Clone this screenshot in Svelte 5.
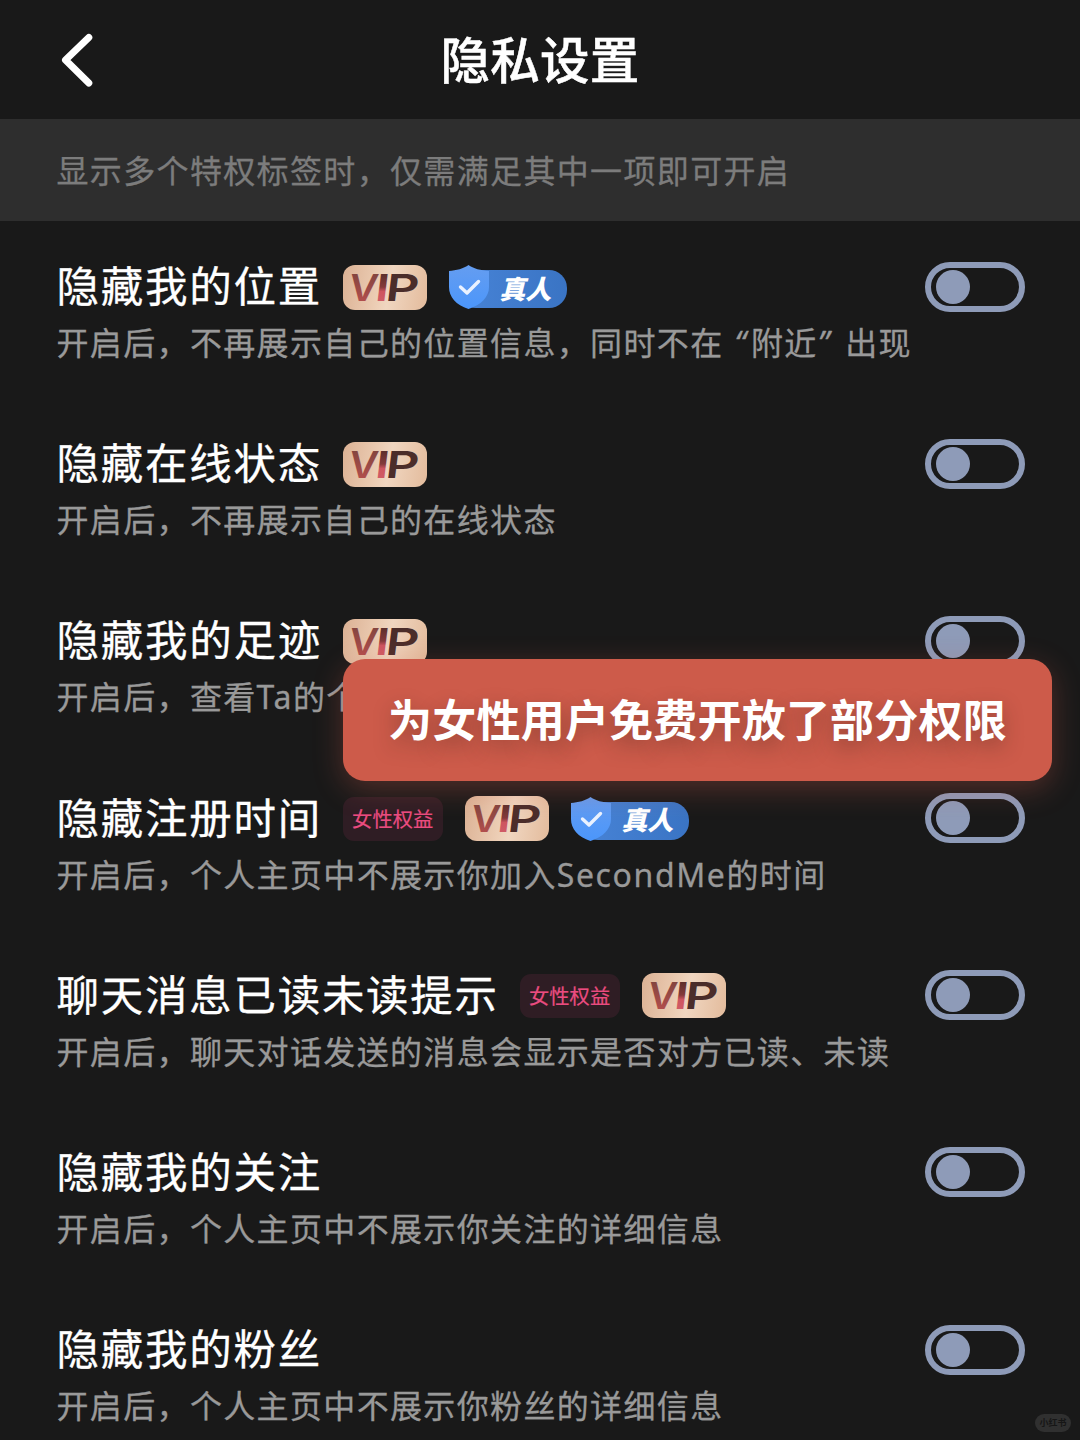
<script>
    let settings = $state([
        { title: '隐藏我的位置', desc: '开启后，不再展示自己的位置信息，同时不在“附近”出现', tags: ['vip', 'real'], on: false },
        { title: '隐藏在线状态', desc: '开启后，不再展示自己的在线状态', tags: ['vip'], on: false },
        { title: '隐藏我的足迹', desc: '开启后，查看Ta的个', tags: ['vip'], on: false },
        { title: '隐藏注册时间', desc: '开启后，个人主页中不展示你加入SecondMe的时间', tags: ['female', 'vip', 'real'], on: false },
        { title: '聊天消息已读未读提示', desc: '开启后，聊天对话发送的消息会显示是否对方已读、未读', tags: ['female', 'vip'], on: false },
        { title: '隐藏我的关注', desc: '开启后，个人主页中不展示你关注的详细信息', tags: [], on: false },
        { title: '隐藏我的粉丝', desc: '开启后，个人主页中不展示你粉丝的详细信息', tags: [], on: false }
    ]);

    // latin words and quotes get their own face and width
    function split(text) {
        return text.split(/([A-Za-z]+|[“”])/).filter(Boolean);
    }
</script>

<svg width="0" height="0" class="defs" aria-hidden="true">
    <defs>
        <linearGradient id="vip-v" x1="0" y1="0" x2="0" y2="1">
            <stop offset="0.2" stop-color="#83453f" />
            <stop offset="0.8" stop-color="#b04e4c" />
        </linearGradient>
        <linearGradient id="vip-i" x1="0" y1="0" x2="0" y2="1">
            <stop offset="0.2" stop-color="#5b2f2c" />
            <stop offset="0.5" stop-color="#843a3b" />
            <stop offset="0.6" stop-color="#ce5560" />
            <stop offset="1" stop-color="#d0606a" />
        </linearGradient>
        <linearGradient id="shield" x1="0" y1="0" x2="0" y2="1">
            <stop offset="0" stop-color="#659df0" />
            <stop offset="1" stop-color="#4b96fb" />
        </linearGradient>
    </defs>
</svg>

<div class="page">
    <header class="nav">
        <button class="back" aria-label="返回">
            <svg width="34" height="56" viewBox="0 0 34 56">
                <path d="M28.800 5.500 L5.500 28 L28.800 51" fill="none" stroke="#fff" stroke-width="7" stroke-linecap="round" stroke-linejoin="round" />
            </svg>
        </button>
        <h1>隐私设置</h1>
    </header>

    <p class="notice">显示多个特权标签时，仅需满足其中一项即可开启</p>

    <main>
        {#each settings as item}
            <section class="row">
                <div class="info">
                    <div class="title-line">
                        <h2>{item.title}</h2>
                        {#each item.tags as tag}
                            {#if tag === 'vip'}
                                <span class="vip">
                                    <svg width="84" height="45" viewBox="0 0 84 45">
                                        <g class="vip-text" transform="translate(0 35.500) skewX(-7)">
                                            <text x="4.500" textLength="29" lengthAdjust="spacingAndGlyphs" fill="url(#vip-v)">V</text>
                                            <text x="31" textLength="14" lengthAdjust="spacingAndGlyphs" fill="url(#vip-i)">I</text>
                                            <text x="41.500" textLength="33" lengthAdjust="spacingAndGlyphs" fill="#4b2d2a">P</text>
                                        </g>
                                    </svg>
                                </span>
                            {:else if tag === 'real'}
                                <span class="real">
                                    <svg width="42" height="46" viewBox="0 0 42 46">
                                        <path d="M20.500 1 C25 4.500 33 6.500 41 7 V23 C41 33 33 41 20.500 45 C8 41 1 33 1 23 V7 C8 6.500 16 4.500 20.500 1 Z" fill="url(#shield)" />
                                        <path d="M12.500 23 L19 29 L30.500 17.500" fill="none" stroke="#eaf2ff" stroke-width="3.400" stroke-linecap="round" stroke-linejoin="round" />
                                    </svg>
                                    <b>真人</b>
                                </span>
                            {:else}
                                <span class="female">女性权益</span>
                            {/if}
                        {/each}
                    </div>
                    <p class="desc">
                        {#each split(item.desc) as part}{#if part === '“'}<span class="quote open">“</span>{:else if part === '”'}<span class="quote">”</span>{:else if /^[A-Za-z]/.test(part)}<span class="latin">{part}</span>{:else}{part}{/if}{/each}
                    </p>
                </div>
                <button
                    class="switch"
                    class:on={item.on}
                    role="switch"
                    aria-checked={item.on}
                    aria-label={item.title}
                    onclick={() => (item.on = !item.on)}
                ><i></i></button>
            </section>
        {/each}
    </main>

    <div class="toast">为女性用户免费开放了部分权限</div>
    <span class="watermark">小红书</span>
</div>

<style>
    :global(body) {
        background: #191919;
    }

    .defs {
        position: absolute;
    }

    .page {
        position: relative;
        width: 1080px;
        height: 1440px;
        overflow: hidden;
        background: #191919;
        color: #fff;
        font-family: 'Noto Sans CJK SC', sans-serif;
    }

    h1, h2, p {
        margin: 0;
        white-space: nowrap;
    }

    button {
        padding: 0;
        border: none;
        background: none;
        cursor: pointer;
    }

    .nav {
        display: grid;
        grid-template-columns: 200px 1fr 200px;
        align-items: center;
        height: 119px;
    }

    .back {
        justify-self: start;
        margin-left: 60px;
        height: 56px;
    }

    .back svg {
        display: block;
    }

    h1 {
        margin-top: -4px;
        text-align: center;
        font-size: 49.500px;
        font-weight: 500;
        line-height: 72px;
        letter-spacing: 0.200px;
        -webkit-text-stroke: 0.500px #fff;
    }

    .notice {
        box-sizing: border-box;
        height: 102px;
        padding-left: 56.500px;
        background: #2e2e2e;
        color: #7c7c7c;
        font-size: 32px;
        line-height: 100px;
        letter-spacing: 1.350px;
        -webkit-text-stroke: 0.300px #7c7c7c;
    }

    .row {
        display: flex;
        justify-content: space-between;
        box-sizing: border-box;
        height: 177.200px;
        padding: 40.500px 55px 0 56.500px;
    }

    .title-line {
        display: flex;
        align-items: center;
        height: 51px;
    }

    h2 {
        margin-top: -6px;
        margin-right: 21.300px;
        font-size: 42.500px;
        font-weight: 400;
        line-height: 52px;
        letter-spacing: 1.730px;
        -webkit-text-stroke: 0.300px #fff;
    }

    .desc {
        margin-top: 6.500px;
        color: #999;
        font-size: 32px;
        line-height: 44px;
        letter-spacing: 1.350px;
        -webkit-text-stroke: 0.300px #999;
    }

    .quote {
        display: inline-block;
        box-sizing: border-box;
        width: 27.500px;
        font-family: 'Noto Sans', sans-serif;
        font-style: italic;
        letter-spacing: 0;
        line-height: 40px;
    }

    .quote.open {
        padding-right: 5px;
        text-align: right;
    }

    .latin {
        font-family: 'Noto Sans', sans-serif;
        letter-spacing: 1.600px;
        line-height: 40px;
    }

    .vip {
        width: 84px;
        height: 45px;
        margin-right: 21px;
        border-radius: 12px;
        background: linear-gradient(100deg, #dbb194 0%, #eccdb4 42%, #f0d6c0 55%, #e3bb9c 100%);
    }

    .vip svg {
        display: block;
    }

    .vip-text text {
        font-family: Inter, sans-serif;
        font-size: 37px;
        font-weight: 600;
    }

    .real {
        position: relative;
        display: flex;
        align-items: center;
        width: 119px;
        height: 46px;
    }

    .real::before {
        content: '';
        position: absolute;
        left: 12px;
        top: 6px;
        width: 107px;
        height: 38px;
        border-radius: 0 18px 18px 16px;
        background: linear-gradient(90deg, #4783d6, #3a74c4);
    }

    .real svg,
    .real b {
        position: relative;
    }

    .real b {
        margin-left: 9px;
        font-size: 26px;
        font-weight: 900;
        font-style: italic;
        line-height: 37px;
    }

    .female {
        width: 100px;
        height: 44px;
        margin-right: 22px;
        border-radius: 11px;
        background: #2f1d24;
        color: #ea4c80;
        font-size: 20.300px;
        line-height: 42px;
        text-align: center;
        text-indent: -1px;
        -webkit-text-stroke: 0.200px #ea4c80;
    }

    .switch {
        display: flex;
        align-items: center;
        box-sizing: border-box;
        width: 100px;
        height: 50px;
        padding-left: 5px;
        border: 6px solid #8e9bb8;
        border-radius: 25px;
    }

    .switch i {
        width: 34px;
        height: 34px;
        border-radius: 50%;
        background: #8e9bb8;
    }

    .switch.on {
        justify-content: flex-end;
        padding: 0 5px 0 0;
    }

    .toast {
        position: absolute;
        left: 343px;
        top: 659px;
        width: 709px;
        height: 122px;
        border-radius: 22px;
        background: #cd5b4a;
        box-shadow: 0 8px 30px rgba(205, 91, 74, 0.32);
        font-size: 44px;
        font-weight: 700;
        line-height: 118px;
        letter-spacing: 0.200px;
        text-align: center;
        text-shadow: 0 8px 20px rgba(50, 30, 20, 0.35);
        white-space: nowrap;
    }

    .watermark {
        position: absolute;
        right: 9px;
        bottom: 8px;
        width: 36px;
        height: 18px;
        border-radius: 9px;
        background: #303030;
        color: #161616;
        font-size: 9px;
        font-weight: 700;
        line-height: 18px;
        text-align: center;
    }
</style>
